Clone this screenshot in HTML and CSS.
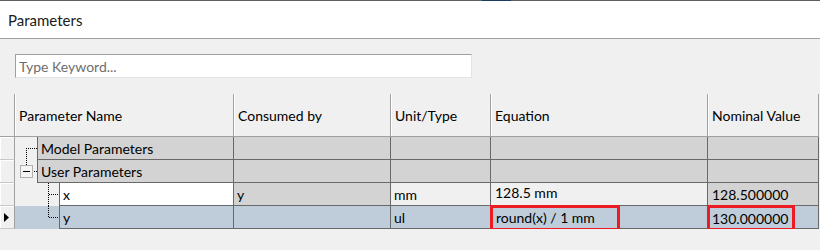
FILE: index.html
```html
<!DOCTYPE html>
<html>
<head>
  <title>Parameters</title>
  <link rel="stylesheet" href="styles.css">
</head>
<body>

  <div class="topline">
    <span class="topline-left"></span>
    <span class="topline-tab"></span>
    <span class="topline-right"></span>
  </div>

  <div class="title">Parameters</div>

  <div class="panel">
    <input class="search" type="text" placeholder="Type Keyword...">

    <div class="grid">
      <div class="row head">
        <div class="cell rowhead"></div>
        <div class="cell">Parameter Name</div>
        <div class="cell">Consumed by</div>
        <div class="cell">Unit/Type</div>
        <div class="cell">Equation</div>
        <div class="cell">Nominal Value</div>
      </div>

      <div class="row">
        <div class="cell rowhead"></div>
        <div class="cell name">
          <svg class="gutter" width="22" height="23">
            <line x1="11.5" y1="11" x2="11.5" y2="23" class="dots"/>
            <line x1="11" y1="11.5" x2="22" y2="11.5" class="dots"/>
          </svg>
          <div class="label group">Model Parameters</div>
        </div>
        <div class="cell group"></div>
        <div class="cell group"></div>
        <div class="cell group"></div>
        <div class="cell group"></div>
      </div>

      <div class="row">
        <div class="cell rowhead"></div>
        <div class="cell name">
          <svg class="gutter" width="22" height="23">
            <line x1="11.5" y1="0" x2="11.5" y2="6" class="dots"/>
            <rect x="5.5" y="5.5" width="12" height="12" class="toggle"/>
            <line x1="8" y1="11.5" x2="15" y2="11.5" class="minus"/>
            <line x1="19" y1="11.5" x2="22" y2="11.5" class="dots"/>
          </svg>
          <div class="label group">User Parameters</div>
        </div>
        <div class="cell group"></div>
        <div class="cell group"></div>
        <div class="cell group"></div>
        <div class="cell group"></div>
      </div>

      <div class="row">
        <div class="cell rowhead"></div>
        <div class="cell name">
          <svg class="gutter" width="44" height="23">
            <line x1="33.5" y1="0" x2="33.5" y2="23" class="dots"/>
            <line x1="34" y1="11.5" x2="44" y2="11.5" class="dots"/>
          </svg>
          <div class="label">x</div>
        </div>
        <div class="cell group">y</div>
        <div class="cell">mm</div>
        <div class="cell equation">128.5 mm</div>
        <div class="cell group value">128.500000</div>
      </div>

      <div class="row selected">
        <div class="cell rowhead">
          <svg width="5" height="9"><polygon points="0,0 5,4.5 0,9" fill="#000"/></svg>
        </div>
        <div class="cell name">
          <svg class="gutter" width="44" height="23">
            <line x1="33.5" y1="0" x2="33.5" y2="12" class="dots"/>
            <line x1="34" y1="11.5" x2="44" y2="11.5" class="dots"/>
          </svg>
          <div class="label">y</div>
        </div>
        <div class="cell"></div>
        <div class="cell">ul</div>
        <div class="cell marked">
          <div class="mark eq-mark">round(x) / 1 mm</div>
        </div>
        <div class="cell marked">
          <div class="mark value-mark">130.000000</div>
        </div>
      </div>
    </div>
  </div>

</body>
</html>
```

FILE: styles.css
```css
body {
  margin: 0;
  background: #f0f0f0;
  font-family: Lato, "Noto Sans", sans-serif;
  font-size: 14px;
  color: #000;
}

.topline {
  display: flex;
  height: 1px;
}

.topline-left {
  width: 482px;
  background: #5f5f5f;
}

.topline-tab {
  width: 29px;
  background: #1b3b60;
}

.topline-right {
  flex: 1;
  background: #5f5f5f;
}

.title {
  height: 37px;
  background: #fff;
  border-bottom: 1px solid #a0a0a0;
  padding-left: 8px;
  font-size: 15px;
  line-height: 39px;
  color: #1a1a1a;
  box-sizing: border-box;
  height: 38px;
}

.panel {
  padding-top: 15px;
}

.search {
  display: block;
  box-sizing: border-box;
  margin-left: 15px;
  width: 457px;
  height: 24px;
  border: 1px solid #e3e3e3;
  border-top-color: #a0a0a0;
  border-left-color: #a0a0a0;
  padding: 0 3px;
  font-family: Lato, "Noto Sans", sans-serif;
  font-size: 14px;
  outline: none;
}

.search::placeholder {
  color: #6e6e6e;
}

.grid {
  margin-top: 16px;
  width: 819px;
}

.row {
  display: grid;
  grid-template-columns: 15px 219px 157px 100px 217px 111px;
  height: 23px;
}

.cell {
  box-sizing: border-box;
  display: flex;
  align-items: center;
  padding-left: 3px;
  border-right: 1px solid #696969;
  border-bottom: 1px solid #696969;
  white-space: nowrap;
}

.head {
  height: 43px;
}

.head .cell {
  background: #f0f0f0;
  padding-left: 4px;
  border-right-color: #a0a0a0;
  border-bottom-color: #a0a0a0;
  box-shadow: inset 1px 0 0 #fff;
}

.rowhead {
  background: #f0f0f0;
  padding-left: 4px;
  border-right-color: #a0a0a0;
  border-bottom-color: #c8c8c8;
  box-shadow: inset 1px 1px 0 #fff;
}

.head .rowhead {
  box-shadow: none;
}

.name {
  padding: 0;
  border-bottom: none;
  align-items: stretch;
}

.gutter {
  flex: none;
  display: block;
}

.dots {
  stroke: #000;
  stroke-width: 1;
  stroke-dasharray: 1 1;
  shape-rendering: crispEdges;
}

.toggle {
  fill: #f4f4f4;
  stroke: #b0b0b0;
  shape-rendering: crispEdges;
}

.minus {
  stroke: #000;
  stroke-width: 1;
  shape-rendering: crispEdges;
}

.label {
  flex: 1;
  display: flex;
  align-items: center;
  padding-left: 3px;
  background: #fff;
  border-left: 1px solid #696969;
  border-bottom: 1px solid #696969;
}

.group {
  background: #d3d3d3;
}

.equation {
  padding-left: 4px;
  padding-bottom: 3px;
}

.value {
  padding-left: 4px;
  padding-top: 1px;
}

.selected .cell,
.selected .label {
  background: #bfcddb;
}

.selected .rowhead {
  background: #f0f0f0;
}

.marked {
  padding: 0;
  align-items: flex-start;
}

.mark {
  box-sizing: border-box;
  height: 26px;
  margin: -1px 0 -3px -1px;
  border: 3px solid #ec1c24;
  display: flex;
  align-items: center;
}

.eq-mark {
  width: 130px;
  padding-left: 3px;
  padding-bottom: 2px;
}

.value-mark {
  width: 88px;
  padding-left: 2px;
}
```
